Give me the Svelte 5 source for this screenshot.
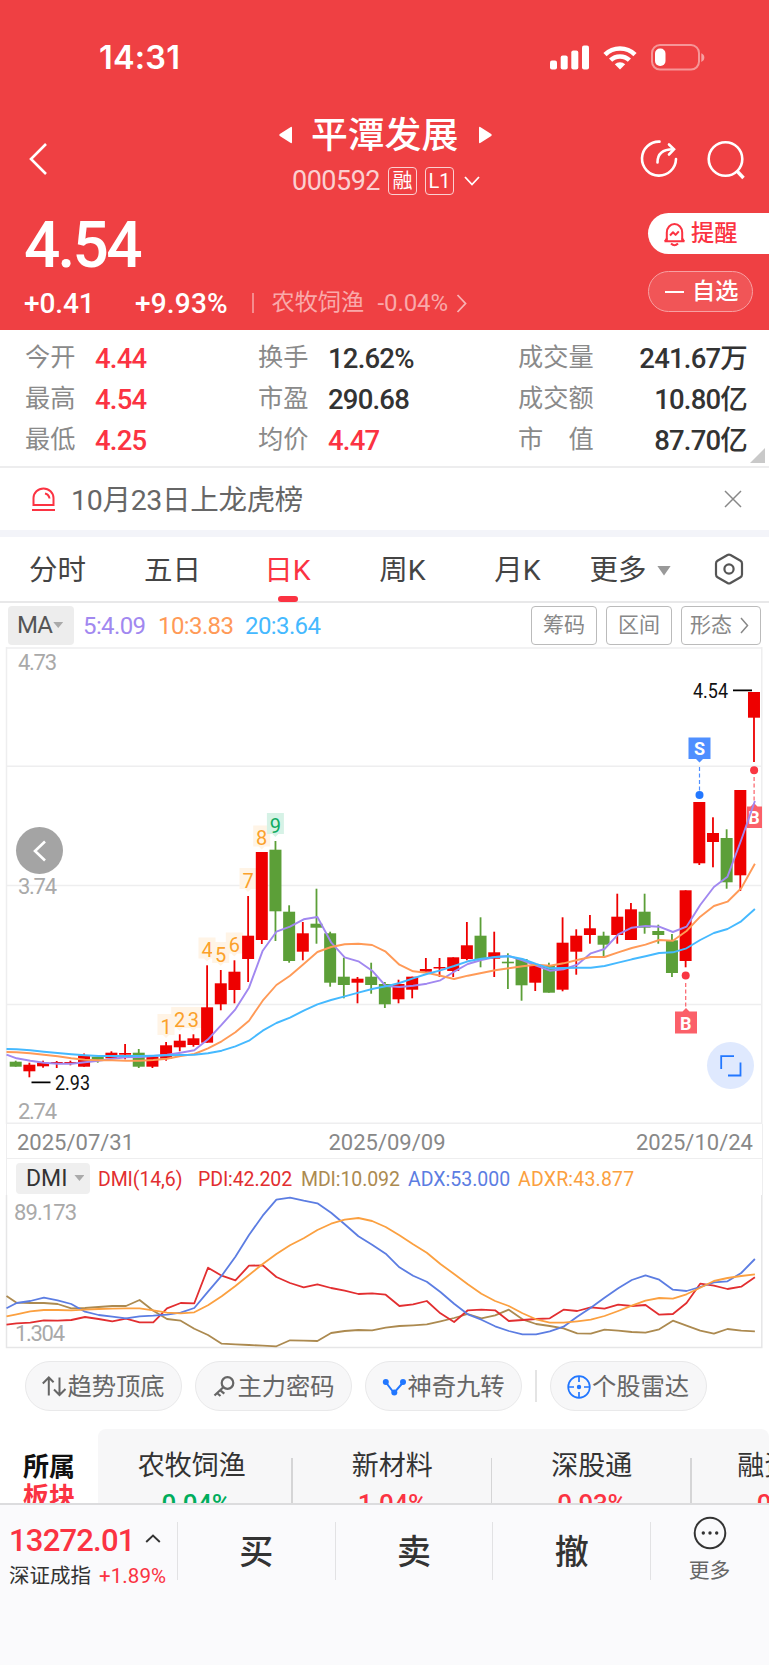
<script>
  const quotes = [
    [['今开', '4.44', true], ['换手', '12.62%', false], ['成交量', '241.67万', false]],
    [['最高', '4.54', true], ['市盈', '290.68', false], ['成交额', '10.80亿', false]],
    [['最低', '4.25', true], ['均价', '4.47', true], ['市　值', '87.70亿', false]]
  ];

  const tabs = ['分时', '五日', '日K', '周K', '月K'];

  const sectors = [
    { name: '农牧饲渔', change: '-0.04%', down: true },
    { name: '新材料', change: '1.04%' },
    { name: '深股通', change: '0.93%' },
    { name: '融资融券', change: '0.72%' }
  ];

  // pixel y of high, body top, body bottom, low; last flag marks a falling day
  const CHART_TOP = 647;
  const candles = [
    [1060.7, 1061.7, 1066.7, 1066.7, 1], [1062.7, 1064.7, 1071.3, 1077.3, 0], [1060.7, 1062.7, 1066.3, 1067.7, 0],
    [1061, 1062, 1063.5, 1068, 0], [1060.7, 1062, 1063.5, 1065.3, 0], [1053.5, 1055.3, 1066.7, 1066.7, 0],
    [1056.7, 1056.7, 1060.3, 1062.7, 1], [1051.3, 1052.7, 1058.3, 1058.3, 0], [1044, 1053, 1054.7, 1059.3, 0],
    [1049, 1052.7, 1066.7, 1068, 1], [1056.7, 1056.7, 1066.7, 1068, 0], [1042, 1045.3, 1058.7, 1060.7, 0],
    [1034.3, 1040.7, 1047.3, 1051.3, 0], [1034.3, 1038.3, 1045, 1046.7, 0], [965.3, 1007.3, 1042.7, 1042.7, 0],
    [970, 983.3, 1004.3, 1010.3, 0], [960.3, 971.7, 990, 1003.3, 0], [896, 935.7, 959, 982, 0],
    [852, 852, 940, 944, 0], [841, 849.7, 911.3, 941, 1], [905.3, 911.7, 961, 962.7, 1],
    [922, 933.3, 951.7, 960.3, 0], [888.7, 923.7, 927.7, 943.7, 1], [931.7, 933.3, 982.7, 986.7, 1],
    [957.7, 976.7, 985, 998.3, 1], [977, 978.7, 982.7, 1003.3, 0], [962.7, 976.7, 985, 993.7, 1],
    [982, 984, 1004.3, 1008, 1], [979.7, 984, 999.3, 1003.3, 0], [976.7, 976.7, 989.7, 998.3, 0],
    [958, 969, 971.7, 971.7, 0], [958, 967, 968.5, 977, 0], [957.3, 957.3, 971, 977, 0],
    [922, 945.3, 959, 960.3, 0], [917.3, 935.7, 959, 967.3, 1], [931.7, 952.3, 958.7, 977, 0],
    [953.3, 961.7, 963.3, 989, 1], [959, 959, 985.3, 1000.7, 1], [965, 965, 982.7, 991, 0],
    [962.7, 965, 992.7, 992.7, 1], [917.3, 942.7, 989.7, 991.3, 0], [929.3, 935.7, 951.7, 974.7, 0],
    [915, 928.3, 935, 943.7, 0], [931.7, 935.7, 944.7, 956, 1], [893.7, 916.7, 935, 943.7, 0],
    [903, 909.3, 940, 940, 0], [893.7, 911.7, 927.7, 933.7, 1], [924.7, 931, 935, 943.7, 1],
    [934, 940.3, 973, 977, 1], [890.3, 890.3, 961, 967.3, 0], [802, 802, 863.3, 865, 0],
    [817.3, 833, 842, 867.3, 0], [829.3, 838, 882.3, 888.7, 1], [790, 790, 875.3, 891, 0],
    [692, 692, 717.7, 762, 0]
  ];

  // first value of every series sits on the left frame
  const averages = [
    { color: '#a188f0', ys: [1054.7, 1058.3, 1060.7, 1062.7, 1063.7, 1063.7, 1062.3, 1060.7, 1058.7, 1057.3, 1057, 1056, 1054.7, 1052.7, 1050.3, 1039.3, 1024.7, 1009.3, 987.7, 950.7, 931.7, 926.7, 919.3, 917, 942.3, 957.3, 961.3, 970.7, 986, 987, 985.7, 983.7, 980.3, 971.7, 964, 960, 957, 956, 960.3, 965.7, 970.7, 969.3, 964.7, 953.3, 949, 934.3, 927.7, 926, 926.7, 932, 926.7, 905, 887, 876.7, 840, 801] },
    { color: '#ff9a57', ys: [1052, 1052.3, 1053.3, 1054.7, 1056.3, 1058.3, 1059.7, 1060.3, 1060.3, 1060.7, 1060.7, 1060, 1058.7, 1056, 1054, 1048.3, 1041.3, 1032.3, 1020.7, 1000.7, 985, 975.7, 964, 952, 947, 944.3, 943.7, 945, 951.7, 964.7, 971.3, 972.7, 975.7, 979, 975.7, 973, 970.3, 968.3, 966.3, 964.7, 965.7, 963.3, 960, 957, 957, 952.3, 948, 944.7, 940, 940.7, 931, 916.7, 906, 901.7, 888.3, 863.7] },
    { color: '#45b9ff', ys: [1049, 1049.3, 1050.3, 1051.7, 1053, 1054.3, 1055.3, 1056, 1056, 1056, 1056, 1055.7, 1055.3, 1055, 1054.7, 1053.3, 1050.7, 1046.3, 1040.7, 1030.7, 1023, 1017.7, 1010.7, 1004.3, 1000, 996.3, 992.7, 989, 986.3, 983, 978.3, 974, 970.3, 966, 961.3, 958.7, 957, 956.3, 959, 964, 968.3, 968, 967.7, 967.7, 966, 962.7, 959.3, 956.3, 953, 952.3, 948.3, 940, 933, 929, 921.3, 909] }
  ];

  // thirds of a pixel below the date row
  const DMI_TOP = 1195;
  const dmi = [
    { color: '#ac8a50', ys: [528, 548, 549, 549, 552, 565, 564, 561, 558, 558, 540, 572, 597, 602, 626, 645, 671, 673, 675, 677, 679, 661, 662, 663, 639, 633, 630, 631, 623, 618, 616, 613, 604, 594, 582, 595, 586, 569, 598, 612, 618, 625, 640, 641, 629, 632, 636, 638, 628, 602, 617, 632, 641, 627, 632, 634] },
    { color: '#e22e30', ys: [614, 610, 608, 601, 602, 600, 591, 597, 604, 596, 607, 607, 565, 549, 550, 443, 467, 481, 437, 436, 471, 489, 502, 493, 504, 512, 522, 520, 524, 558, 553, 543, 580, 606, 571, 569, 571, 603, 600, 597, 595, 569, 573, 562, 566, 554, 558, 555, 584, 582, 549, 491, 497, 507, 500, 472] },
    { color: '#5c7de2', ys: [565, 549, 543, 533, 541, 552, 575, 585, 590, 595, 589, 587, 584, 578, 564, 515, 467, 410, 345, 287, 239, 233, 242, 250, 278, 313, 349, 374, 401, 442, 467, 485, 516, 551, 583, 599, 619, 633, 643, 643, 634, 620, 590, 563, 533, 505, 480, 466, 479, 509, 513, 501, 487, 484, 459, 417] },
    { color: '#fba040', ys: [589, 583, 574, 570, 570, 571, 569, 567, 566, 565, 565, 571, 578, 580, 577, 556, 529, 498, 465, 432, 402, 376, 355, 330, 311, 299, 294, 303, 321, 346, 373, 398, 432, 462, 493, 521, 543, 558, 580, 598, 608, 608, 604, 599, 588, 573, 557, 542, 534, 536, 523, 503, 483, 474, 468, 463] }
  ];

  // nine-turn counters: label, x, top
  const turns = [
    ['1', 166, 1014], ['2', 179.7, 1007], ['3', 193.3, 1007], ['4', 207, 937.5],
    ['5', 220.7, 942], ['6', 234.3, 932.5], ['7', 248, 868], ['8', 261.7, 825.5], ['9', 275.4, 813]
  ];

  const xAt = (i) => 15.7 + i * 13.672;

  function toPoints(ys, fy) {
    return ys.map((y, i) => `${i === 0 ? 6.5 : (xAt(i - 1) + 0.9).toFixed(1)},${fy(y).toFixed(1)}`).join(' ');
  }
</script>

<main class="screen">
  <header class="head">
    <div class="status">
      <span class="clock">14:31</span>
      <svg class="signal" width="39" height="25" viewBox="0 0 39 25" fill="#fff">
        <rect x="0" y="15.5" width="7" height="9" rx="2" />
        <rect x="10.7" y="10.5" width="7" height="14" rx="2" />
        <rect x="21.3" y="5.5" width="7" height="19" rx="2" />
        <rect x="32" y="0.5" width="7" height="24" rx="2" />
      </svg>
      <svg class="wifi" width="34" height="25" viewBox="0 0 34 25" fill="none" stroke="#fff" stroke-width="4.6">
        <path d="M2 9.6a21.4 21.4 0 0 1 30 0" />
        <path d="M7.6 15.2a13.6 13.6 0 0 1 18.8 0" />
        <path d="M17 24.6l-5.2-5.3a7.6 7.6 0 0 1 10.4 0z" fill="#fff" stroke="none" />
      </svg>
      <svg class="battery" width="54" height="27" viewBox="0 0 54 27">
        <rect x="1" y="1" width="47" height="24.6" rx="8" fill="none" stroke="#fff" stroke-opacity=".45" stroke-width="2" />
        <rect x="4" y="4.5" width="10.5" height="17.5" rx="5" fill="#fff" />
        <path d="M50.3 9.3q3 1.2 3 4.3t-3 4.3z" fill="#fff" fill-opacity=".5" />
      </svg>
    </div>

    <div class="nav">
      <svg class="back" width="20" height="34" viewBox="0 0 20 34" fill="none" stroke="#fff" stroke-width="2.6">
        <path d="M18 2L3 17l15 15" />
      </svg>
      <div class="title">
        <div class="title-name">
          <svg width="13" height="18" viewBox="0 0 13 18" fill="#fff"><path d="M13 2v14q0 2-1.6 .8L.8 10q-1-1 0-2L11.4 1.2Q13 0 13 2z" /></svg>
          <h1>平潭发展</h1>
          <svg width="13" height="18" viewBox="0 0 13 18" fill="#fff"><path d="M0 2v14q0 2 1.6 .8L12.2 10q1-1 0-2L1.6 1.2Q0 0 0 2z" /></svg>
        </div>
        <div class="title-code">
          <span class="code">000592</span>
          <span class="tag">融</span>
          <span class="tag tag-l1">L1</span>
          <svg width="16" height="10" viewBox="0 0 16 10" fill="none" stroke="#fff" stroke-width="1.8"><path d="M1 1l7 7.5L15 1" /></svg>
        </div>
      </div>
      <svg class="share" width="40" height="40" viewBox="0 0 40 40" fill="none" stroke="#fff" stroke-width="2.6" stroke-linecap="round">
        <path d="M20.5 2.6A17 17 0 1 0 37 20" />
        <path d="M18.5 23.5C18.5 15 23 10.3 34 10.3" />
        <path d="M30 5.5l5 4.8-5 5.2" />
      </svg>
      <svg class="search" width="40" height="40" viewBox="0 0 40 40" fill="none" stroke="#fff" stroke-width="2.6">
        <circle cx="19.5" cy="19" r="16.8" />
        <path d="M31 31l6.5 7" stroke-width="3.4" />
      </svg>
    </div>

    <div class="price-area">
      <div class="price-left">
        <div class="price">4.54</div>
        <div class="changes">
          <span class="change">+0.41</span>
          <span class="change change-pct">+9.93%</span>
          <span class="bar"></span>
          <span class="industry">农牧饲渔</span>
          <span class="industry-pct">-0.04%</span>
          <svg width="11" height="19" viewBox="0 0 11 19" fill="none" stroke="#fff" stroke-opacity=".6" stroke-width="1.8"><path d="M1.5 1l8 8.5-8 8.5" /></svg>
        </div>
      </div>
      <div class="price-actions">
        <div class="remind">
          <svg width="23" height="25" viewBox="0 0 23 25" fill="none" stroke="#fb3342" stroke-width="2" stroke-linejoin="round">
            <path d="M1.5 19.3h20M3.8 19V10.5a7.7 8.5 0 0 1 15.4 0V19" />
            <path d="M2 19.2l2-3M21 19.2l-2-3M8 21.5q3.5 3.5 7 0" />
            <path d="M7 13.5l3-3.2 2.6 2.6 3.2-3.6" />
          </svg>
          <span>提醒</span>
        </div>
        <div class="watch">
          <i></i>
          <span>自选</span>
        </div>
      </div>
    </div>
  </header>

  <section class="quotes">
    {#each quotes as row}
      <div class="quote-row">
        {#each row as [label, value, up]}
          <div class="quote">
            <span class="quote-label">{label}</span>
            <span class="quote-value" class:up>{value}</span>
          </div>
        {/each}
      </div>
    {/each}
    <i class="corner"></i>
  </section>

  <section class="notice">
    <svg width="25" height="25" viewBox="0 0 25 25" fill="none" stroke="#fb3342" stroke-width="2">
      <path d="M2.5 18V11a10 9.6 0 0 1 20 0v7zM1 23h23" />
      <path d="M14 6.5q4 1 4.5 5" />
    </svg>
    <span class="notice-text">10月23日上龙虎榜</span>
    <svg class="close" width="18" height="18" viewBox="0 0 18 18" stroke="#888" stroke-width="1.5"><path d="M1 1l16 16M17 1L1 17" /></svg>
  </section>

  <nav class="tabs">
    {#each tabs as tab}
      <span class="tab" class:active={tab === '日K'}>{tab}</span>
    {/each}
    <span class="tab tab-more">更多</span>
    <i class="down"></i>
    <svg class="gear" width="30" height="32" viewBox="0 0 30 32" fill="none" stroke="#555" stroke-width="2.2" stroke-linejoin="round">
      <path d="M13.5 2q1.5-.8 3 0l10 5.8q1.5.9 1.5 2.6v11.2q0 1.7-1.5 2.6l-10 5.8q-1.5.8-3 0l-10-5.8Q2 23.3 2 21.6V10.4Q2 8.7 3.5 7.8z" />
      <circle cx="15" cy="16" r="4.6" />
    </svg>
  </nav>

  <section class="ma">
    <span class="ma-select">MA<i class="down small"></i></span>
    <span class="ma-value ma5">5:4.09</span>
    <span class="ma-value ma10">10:3.83</span>
    <span class="ma-value ma20">20:3.64</span>
    <div class="ma-buttons">
      <span>筹码</span>
      <span>区间</span>
      <span class="wide">形态<svg width="9" height="17" viewBox="0 0 9 17" fill="none" stroke="#888" stroke-width="1.5"><path d="M1 1l6.5 7.5L1 16" /></svg></span>
    </div>
  </section>

  <section class="kline">
    <svg width="769" height="477" viewBox="0 0 769 477">
      <g stroke="#eeeeef" stroke-width="1.5">
        <path d="M6.5 0v477M761.8 0v477" />
        <path d="M6 1h756M6 119.3h756M6 238.6h756M6 357.5h756M6 476.2h756" />
      </g>
      <g class="axis">
        <text x="18" y="22.5" textLength="39">4.73</text>
        <text x="18" y="247" textLength="39">3.74</text>
        <text x="18" y="471.5" textLength="39">2.74</text>
      </g>

      {#each turns as [n, x, y]}
        <g class="turn" class:nine={n === '9'}>
          <path d="M{x - 8.5} {y - CHART_TOP}h17v21h-5.5l-3 3-3-3h-5.5z" />
          <text x={x} y={y - CHART_TOP + 19.5} text-anchor="middle">{n}</text>
        </g>
      {/each}

      {#each candles as [high, top, bottom, low, down], i}
        <g fill={down ? '#5c9f38' : '#ee0000'}>
          <rect x={xAt(i) - 0.9} y={high - CHART_TOP} width="1.8" height={low - high} />
          <rect x={xAt(i) - 6} y={top - CHART_TOP} width="12" height={bottom - top} />
        </g>
      {/each}

      <!-- trade marks -->
      <g class="mark" fill="#4f8fff">
        <path d="M688.5 90.5h22v21.5h-7.5l-3.5 3.5-3.5-3.5h-7.5z" />
        <path d="M699.5 120v24" stroke="#4f8fff" stroke-width="1.2" stroke-dasharray="4 2.5" />
        <circle cx="699.5" cy="148" r="4" fill="#2277ff" />
        <text x="699.5" y="108" text-anchor="middle">S</text>
      </g>
      <g class="mark" fill="#fb6069">
        <path d="M675 364.5h7.5l3.5-3.5 3.5 3.5h7.5v22h-22z" />
        <path d="M685.7 336v24" stroke="#fb6069" stroke-width="1.2" stroke-dasharray="4 2.5" />
        <circle cx="685.7" cy="328.5" r="4" fill="#f93642" />
        <text x="685.8" y="382.5" text-anchor="middle">B</text>
      </g>
      <g class="mark" fill="#fb6069">
        <path d="M747 159.5h3.5l3.5-3.5 3.5 3.5h4.5v21.5h-15z" />
        <path d="M754.1 130v24" stroke="#fb6069" stroke-width="1.2" stroke-dasharray="4 2.5" />
        <circle cx="754.1" cy="123.3" r="4" fill="#f93642" />
        <text x="754" y="177" text-anchor="middle">B</text>
      </g>

      {#each averages as line}
        <polyline points={toPoints(line.ys, (y) => y - CHART_TOP)} fill="none" stroke={line.color} stroke-width="1.9" stroke-linejoin="round" />
      {/each}

      <g class="extreme">
        <path d="M733 43.3h19M31.5 435.3h19" stroke="#000" stroke-width="1.7" />
        <text x="693" y="50.5" textLength="35" lengthAdjust="spacingAndGlyphs">4.54</text>
        <text x="55" y="443" textLength="35" lengthAdjust="spacingAndGlyphs">2.93</text>
      </g>
    </svg>
    <div class="prev">
      <svg width="14" height="22" viewBox="0 0 14 22" fill="none" stroke="#fff" stroke-width="2.6"><path d="M12 1.5L2 11l10 9.5" /></svg>
    </div>
    <div class="expand">
      <svg width="22" height="22" viewBox="0 0 22 22" fill="none" stroke="#2277ff" stroke-width="1.8"><path d="M1.2 14V1.2H14M20.5 7.5v13H8" /></svg>
    </div>
  </section>

  <div class="dates">
    <span>2025/07/31</span>
    <span>2025/09/09</span>
    <span>2025/10/24</span>
  </div>

  <section class="dmi">
    <div class="dmi-legend">
      <span class="dmi-select">DMI<i class="down small"></i></span>
      <span class="lg lg-name">DMI(14,6)</span>
      <span class="lg lg-pdi">PDI:42.202</span>
      <span class="lg lg-mdi">MDI:10.092</span>
      <span class="lg lg-adx">ADX:53.000</span>
      <span class="lg lg-adxr">ADXR:43.877</span>
    </div>
    <svg width="769" height="154" viewBox="0 0 769 154">
      <path d="M6.5 0v152.5H761.8V0" fill="none" stroke="#e6e6e7" stroke-width="1.5" />
      <g class="axis">
        <text x="14" y="25" textLength="63">89.173</text>
        <text x="15" y="145.5" textLength="50">1.304</text>
      </g>
      {#each dmi as line}
        <polyline points={toPoints(line.ys, (y) => 1120 + y / 3 - DMI_TOP)} fill="none" stroke={line.color} stroke-width="1.8" stroke-linejoin="round" />
      {/each}
    </svg>
  </section>

  <section class="tools">
    <span class="tool">
      <svg width="25" height="24" viewBox="0 0 25 24" fill="none" stroke="#666" stroke-width="2"><path d="M.8 8.500L6.800 2.500l4.800 4.800M6.800 3v17.500M12 14.500l5.500 5.500 6-6M17.500 2.500V20" /></svg>趋势顶底
    </span>
    <span class="tool">
      <svg width="25" height="24" viewBox="0 0 25 24" fill="none" stroke="#666" stroke-width="2.2"><circle cx="15.5" cy="8" r="5.8" /><path d="M11.3 12.2L2.5 20.5M5 18l3.5 3M8.3 15.3l4 3.4" /></svg>主力密码
    </span>
    <span class="tool">
      <svg width="25" height="24" viewBox="0 0 25 24" fill="#2277ff"><path d="M4 7.5l8 10.5 9-10.5" fill="none" stroke="#2277ff" stroke-width="2" /><circle cx="3.8" cy="7" r="3" /><circle cx="12.3" cy="17.5" r="3" /><circle cx="21" cy="7" r="3" /></svg>神奇九转
    </span>
    <i class="tool-bar"></i>
    <span class="tool">
      <svg width="25" height="24" viewBox="0 0 25 24" fill="none" stroke="#2277ff" stroke-width="1.7"><circle cx="12" cy="12" r="10.8" /><path d="M12 1v6M12 17v6M1 12h6M17 12h6" /><circle cx="12" cy="12" r="2.2" fill="#2277ff" stroke="none" /></svg>个股雷达
    </span>
  </section>

  <section class="sectors">
    <div class="sectors-title"><b>所属</b><b class="up">板块</b></div>
    <div class="sectors-list">
      {#each sectors as sector}
        <div class="sector">
          <span class="sector-name">{sector.name}</span>
          <span class="sector-change" class:fall={sector.down}>{sector.change}</span>
        </div>
      {/each}
    </div>
  </section>

  <footer class="foot">
    <div class="index">
      <div class="index-value">
        <span>13272.01</span>
        <svg width="16" height="9" viewBox="0 0 16 9" fill="none" stroke="#333" stroke-width="1.9"><path d="M1.2 8l6.8-6.5L14.8 8" /></svg>
      </div>
      <div class="index-name">深证成指<span>+1.89%</span></div>
    </div>
    <div class="trade">买</div>
    <div class="trade">卖</div>
    <div class="trade">撤</div>
    <div class="more">
      <svg width="34" height="34" viewBox="0 0 34 34" fill="#333"><circle cx="17" cy="17" r="15.3" fill="none" stroke="#333" stroke-width="2" /><circle cx="10.3" cy="17" r="1.7" /><circle cx="17" cy="17" r="1.7" /><circle cx="23.7" cy="17" r="1.7" /></svg>
      <span>更多</span>
    </div>
  </footer>
</main>

<style>
  :global(body) {
    background: #fff;
  }

  .screen {
    display: flex;
    flex-direction: column;
    width: 769px;
    height: 1665px;
    overflow: hidden;
    font-family: Roboto, 'Noto Sans CJK SC', sans-serif;
    line-height: 1;
    color: #333;
    white-space: nowrap;
  }

  .screen * {
    box-sizing: border-box;
  }

  svg {
    display: block;
    flex: none;
  }

  .up {
    color: #fb3342;
  }

  /* header */
  .head {
    height: 330px;
    flex: none;
    background: #ef4043;
    color: #fff;
  }

  .status {
    display: flex;
    align-items: center;
    height: 114px;
    padding-left: 99px;
  }

  .clock {
    width: 451px;
    padding-top: 2px;
    font-family: Inter, sans-serif;
    font-size: 32.5px;
    font-weight: 600;
    letter-spacing: 0.2px;
  }

  .wifi {
    margin-left: 14px;
  }

  .battery {
    margin-left: 14px;
  }

  .nav {
    display: flex;
    height: 89px;
    padding-left: 28px;
  }

  .back {
    margin-top: 28px;
  }

  .title {
    width: 559px;
    margin-left: 32px;
  }

  .title-name,
  .title-code {
    display: flex;
    align-items: center;
  }

  .title-name {
    height: 42px;
    padding-left: 199px;
  }

  h1 {
    width: 148px;
    margin: 0 20px 0 19px;
    padding-top: 2px;
    font-size: 36.8px;
    font-weight: 500;
  }

  .title-code {
    height: 48px;
    padding-left: 212px;
    margin-top: 1px;
  }

  .code {
    width: 96px;
    padding-top: 1px;
    font-size: 27px;
    color: #fbd0d1;
    letter-spacing: -0.5px;
  }

  .tag {
    width: 29px;
    height: 28px;
    margin-right: 8px;
    border: 1.5px solid #fbd0d1;
    border-radius: 4px;
    font-size: 20px;
    line-height: 26px;
    text-align: center;
    color: #fff;
  }

  .tag-l1 {
    margin-right: 10px;
  }

  .share {
    margin: 25px 0 0;
  }

  .search {
    margin: 26px 0 0 27px;
  }

  .price-area {
    display: flex;
    justify-content: space-between;
  }

  .price-left {
    padding-left: 24px;
  }

  .price {
    height: 67px;
    margin-top: 9px;
    font-size: 64px;
    line-height: 67px;
    font-weight: 500;
    letter-spacing: -2.8px;
  }

  .changes {
    display: flex;
    align-items: center;
    height: 48px;
  }

  .change {
    width: 111px;
    padding-top: 1px;
    font-size: 28px;
    font-weight: 500;
    letter-spacing: -0.1px;
  }

  .change-pct {
    width: 117px;
    letter-spacing: 0.2px;
  }

  .bar {
    width: 1.5px;
    height: 20px;
    margin-right: 18px;
    background: #f58c8e;
  }

  .industry,
  .industry-pct {
    width: 106px;
    font-size: 23.2px;
    color: #f9a9aa;
  }

  .industry-pct {
    width: 78px;
    font-size: 24px;
    letter-spacing: -0.1px;
  }

  .price-actions {
    display: flex;
    flex-direction: column;
    gap: 17px;
    width: 121px;
    padding-top: 10px;
  }

  .remind,
  .watch {
    display: flex;
    align-items: center;
    height: 41px;
    font-size: 23.2px;
    font-weight: 500;
  }

  .remind {
    gap: 5px;
    padding: 1px 0 0 15px;
    background: #fff;
    border-radius: 21px 0 0 21px;
    color: #fb3342;
  }

  .watch {
    gap: 8px;
    width: 105px;
    padding: 1px 0 0 16px;
    border: 1.5px solid #f7a0a2;
    border-radius: 21px;
    background: #f15557;
  }

  .watch i {
    width: 19px;
    height: 2px;
    background: #fff;
  }

  /* quotes */
  .quotes {
    position: relative;
    height: 138px;
    flex: none;
    padding-top: 7px;
    border-bottom: 2px solid #ededee;
  }

  .quote-row,
  .quote {
    display: flex;
    align-items: center;
  }

  .quote-row {
    height: 41px;
    padding-left: 25px;
  }

  .quote:nth-child(1) {
    width: 233px;
  }

  .quote:nth-child(2) {
    width: 260px;
  }

  .quote:nth-child(3) {
    width: 229px;
    justify-content: space-between;
  }

  .quote-label {
    width: 70px;
    font-size: 25.2px;
    color: #8a8a8a;
  }

  .quote-value {
    padding-top: 3px;
    font-size: 27.5px;
    font-weight: 500;
    letter-spacing: -0.8px;
  }

  .corner {
    position: absolute;
    right: 4px;
    bottom: 3px;
    width: 15px;
    height: 15px;
    background: #c9c9c9;
    clip-path: polygon(100% 0, 100% 100%, 0 100%);
  }

  /* notice */
  .notice {
    display: flex;
    align-items: center;
    height: 69px;
    flex: none;
    padding: 0 27px 0 31px;
    border-bottom: 7px solid #f3f4f9;
  }

  .notice-text {
    flex: 1;
    margin-left: 15px;
    padding-top: 5px;
    font-size: 28.5px;
    letter-spacing: -0.3px;
    color: #666;
  }

  /* tabs */
  .tabs {
    display: flex;
    align-items: center;
    height: 66px;
    flex: none;
    border-bottom: 2px solid #e8e8e9;
  }

  .tab {
    display: flex;
    position: relative;
    justify-content: center;
    align-items: center;
    width: 115px;
    height: 64px;
    padding-top: 4px;
    font-size: 28.5px;
    color: #444;
  }

  .tab.active {
    color: #fb3342;
  }

  .tab.active::after {
    content: '';
    position: absolute;
    bottom: -1px;
    width: 20px;
    height: 6px;
    border-radius: 3px;
    background: #fb3342;
  }

  .tab-more {
    width: 58px;
    margin-left: 14px;
  }

  .down {
    width: 14px;
    height: 10px;
    background: #999;
    clip-path: polygon(0 0, 100% 0, 50% 100%);
  }

  .tabs .down {
    margin: 3px 0 0 10px;
  }

  .down.small {
    width: 10px;
    height: 6px;
    background: #aaa;
  }

  .gear {
    margin-left: 43px;
  }

  /* moving averages */
  .ma {
    display: flex;
    align-items: center;
    height: 44px;
    flex: none;
    padding: 0 8px;
    font-size: 24px;
  }

  .ma-select {
    display: flex;
    align-items: center;
    gap: 1px;
    width: 66px;
    height: 39px;
    padding-left: 9px;
    border-radius: 4px;
    background: #ededed;
    color: #555;
    letter-spacing: -0.8px;
  }

  .ma-value {
    padding-top: 1px;
    letter-spacing: -0.6px;
  }

  .ma5 {
    width: 75px;
    margin-left: 9px;
    color: #a188f0;
  }

  .ma10 {
    width: 87px;
    color: #ff9a57;
  }

  .ma20 {
    color: #45b9ff;
  }

  .ma-buttons {
    display: flex;
    gap: 9px;
    margin-left: auto;
  }

  .ma-buttons span {
    display: flex;
    justify-content: center;
    align-items: center;
    width: 66px;
    height: 39px;
    border: 1.5px solid #bbb;
    border-radius: 4px;
    font-size: 21px;
    color: #888;
  }

  .ma-buttons .wide {
    width: 80px;
    gap: 8px;
    padding-right: 3px;
  }

  /* charts */
  .kline {
    position: relative;
    height: 477px;
    flex: none;
  }

  .axis text {
    font-size: 22px;
    fill: #a9a9a9;
  }

  .turn path {
    fill: #fff4e6;
  }

  .turn text {
    font-size: 20px;
    fill: #fba12a;
  }

  .turn.nine path {
    fill: #d6f2e6;
  }

  .turn.nine text {
    fill: #10ab62;
  }

  .mark text {
    font-size: 18px;
    font-weight: 700;
    fill: #fff;
  }

  .extreme text {
    font-size: 20px;
    fill: #111;
  }

  .prev,
  .expand {
    display: flex;
    position: absolute;
    justify-content: center;
    align-items: center;
    width: 47px;
    height: 47px;
    border-radius: 50%;
  }

  .prev {
    left: 16px;
    top: 180px;
    background: #a4a4a4;
  }

  .expand {
    left: 707px;
    top: 395px;
    background: #dfe9fe;
  }

  .dates {
    display: flex;
    justify-content: space-between;
    align-items: center;
    height: 35px;
    flex: none;
    margin: 0 6px;
    padding: 3px 9px 0 10px;
    border: solid #eeeeef;
    border-width: 0 1px 1px;
    font-size: 22px;
    color: #888;
  }

  .dates span:nth-child(2) {
    margin-left: 4px;
  }

  .dmi {
    height: 190px;
    flex: none;
  }

  .dmi-legend {
    display: flex;
    align-items: center;
    height: 36px;
    margin: 0 6px;
    padding: 2px 0 0 9px;
    border: solid #eeeeef;
    border-width: 0 1px;
    font-size: 20px;
  }

  .dmi-select {
    display: flex;
    align-items: center;
    gap: 7px;
    width: 74px;
    height: 31px;
    margin-right: 8px;
    padding-left: 10px;
    border-radius: 4px;
    background: #efefef;
    font-size: 23px;
  }

  .lg {
    padding-top: 3px;
    font-size: 19.5px;
    letter-spacing: -0.1px;
  }

  .lg-name {
    width: 100px;
    color: #e22e30;
  }

  .lg-pdi {
    width: 103px;
    color: #e22e30;
  }

  .lg-mdi {
    width: 107px;
    color: #ac8a50;
  }

  .lg-adx {
    width: 110px;
    letter-spacing: 0;
    color: #5c7de2;
  }

  .lg-adxr {
    letter-spacing: 0.2px;
    color: #fba040;
  }

  /* tools */
  .tools {
    display: flex;
    align-items: center;
    height: 80px;
    flex: none;
    gap: 13px;
    padding: 0 0 6px 25px;
  }

  .tool {
    display: flex;
    justify-content: center;
    align-items: center;
    width: 157px;
    height: 50px;
    padding-top: 2px;
    border: 1.5px solid #e9e9ea;
    border-radius: 25px;
    background: #f7f7f8;
    font-size: 24.3px;
    color: #666;
  }

  .tool-bar {
    width: 1.5px;
    height: 32px;
    background: #e4e4e4;
  }

  /* sectors */
  .sectors {
    display: flex;
    height: 74px;
    flex: none;
    overflow: hidden;
  }

  .sectors-title {
    display: flex;
    flex-direction: column;
    width: 98px;
    flex: none;
    gap: 4px;
    padding: 25px 0 0 23px;
    font-size: 26px;
    color: #111;
  }

  .sectors-list {
    display: flex;
    flex: none;
    width: 671px;
    overflow: hidden;
    padding-top: 24px;
    border-radius: 8px 8px 0 0;
    background: #f7f7f8;
  }

  .sector {
    display: flex;
    position: relative;
    flex-direction: column;
    align-items: center;
    width: 199.5px;
    flex: none;
  }

  .sector:first-child {
    width: 194.5px;
    padding-right: 7px;
  }

  .sector:not(:last-child)::after {
    content: '';
    position: absolute;
    right: 0;
    top: 5px;
    width: 1.5px;
    height: 50px;
    background: #d5d5d6;
  }

  .sector-name {
    font-size: 27px;
  }

  .sector-change {
    margin-top: 11px;
    font-size: 26px;
    color: #fb3342;
    font-weight: 500;
    letter-spacing: -0.3px;
  }

  .sector-change.fall {
    color: #00ad5c;
  }

  /* footer */
  .foot {
    display: flex;
    flex: 1;
    padding-top: 17px;
    border-top: 2px solid #dcdcde;
    background: #fafafc;
  }

  .index {
    width: 177px;
    padding-left: 9px;
  }

  .index-value {
    display: flex;
    align-items: center;
    height: 36px;
    gap: 10px;
    font-size: 31px;
    color: #fb3342;
    font-weight: 500;
    letter-spacing: -0.8px;
  }

  .index-value svg {
    margin-top: -3px;
  }

  .index-name {
    display: flex;
    align-items: center;
    height: 34px;
    margin-top: 1px;
    font-size: 20.5px;
  }

  .index-name span {
    margin-left: 8px;
    color: #fb3342;
    letter-spacing: 0.1px;
  }

  .trade {
    display: flex;
    justify-content: center;
    align-items: center;
    width: 157.7px;
    height: 58px;
    padding-top: 2px;
    border-left: 1.5px solid #e2e2e4;
    font-size: 34px;
    font-weight: 500;
  }

  .more {
    display: flex;
    flex-direction: column;
    align-items: center;
    width: 118px;
    height: 58px;
    border-left: 1.5px solid #e2e2e4;
  }

  .more svg {
    margin-top: -6px;
  }

  .more span {
    margin-top: 11px;
    font-size: 20.8px;
    color: #666;
  }
</style>
